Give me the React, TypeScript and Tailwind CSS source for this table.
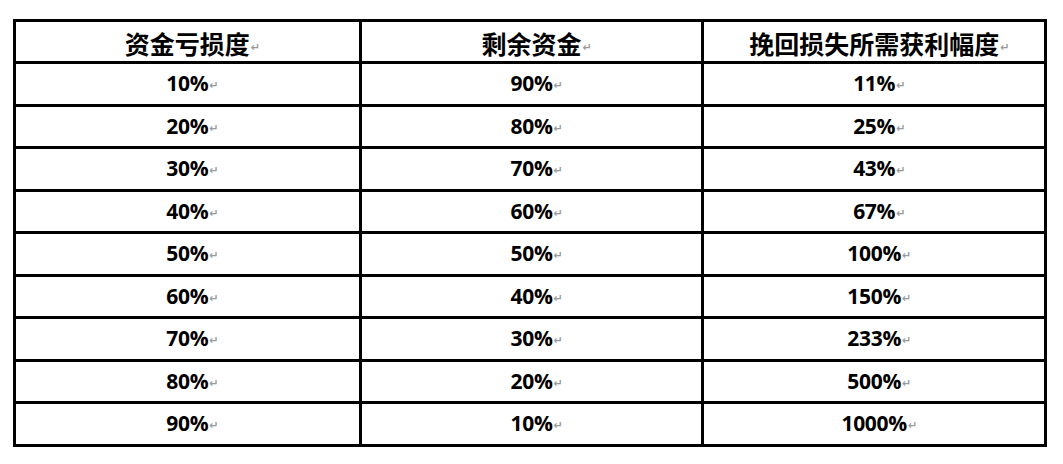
import React from "react";

const rows: [string, string, string][] = [
  ["10%", "90%", "11%"],
  ["20%", "80%", "25%"],
  ["30%", "70%", "43%"],
  ["40%", "60%", "67%"],
  ["50%", "50%", "100%"],
  ["60%", "40%", "150%"],
  ["70%", "30%", "233%"],
  ["80%", "20%", "500%"],
  ["90%", "10%", "1000%"],
];

const headers = ["资金亏损度", "剩余资金", "挽回损失所需获利幅度"];

function Mark() {
  return (
    <span className="absolute left-full bottom-[3px] ml-[1px] text-[11px] leading-none text-[#9a9a9a] [font-family:'DejaVu_Sans',sans-serif]">
      ↵
    </span>
  );
}

function Cell({ text, head, first }: { text: string; head?: boolean; first?: boolean }) {
  return (
    <div
      className={
        "flex items-center justify-center " +
        (first ? "" : "border-l-[3px] border-black")
      }
    >
      <span
        className={
          "relative leading-none text-black " +
          (head
            ? "text-[25px] font-semibold [font-family:'Noto_Sans_CJK_SC',sans-serif] mt-[3px]"
            : "text-[21px] font-bold tracking-[-0.3px] [font-family:'Open_Sans',Lato,sans-serif]")
        }
      >
        {text}
        <Mark />
      </span>
    </div>
  );
}

export default function App() {
  return (
    <div className="w-[1063px] h-[464px] bg-white pt-[19px] pl-[13px]">
      <div className="w-[1034px] border-[3px] border-black flex flex-col">
        <div className="grid grid-cols-3 h-[39px]">
          {headers.map((h, i) => (
            <Cell key={h} text={h} head first={i === 0} />
          ))}
        </div>
        {rows.map((r, ri) => (
          <div key={ri} className="grid grid-cols-3 h-[42.5px] border-t-[3px] border-black">
            {r.map((c, ci) => (
              <Cell key={ci} text={c} first={ci === 0} />
            ))}
          </div>
        ))}
      </div>
    </div>
  );
}
